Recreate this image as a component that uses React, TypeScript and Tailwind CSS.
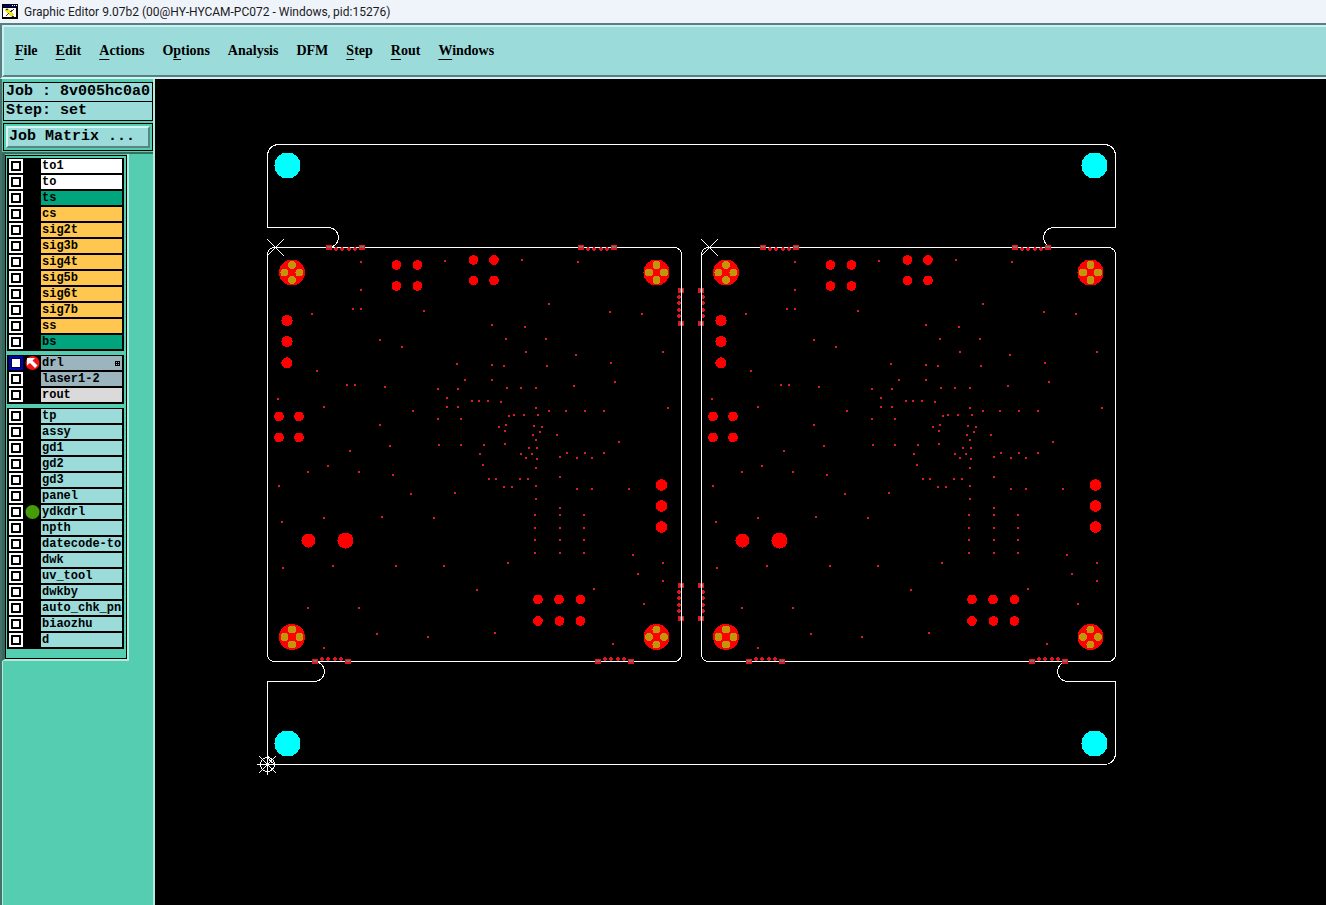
import { useState } from 'react'

type Layer = {
  name: string
  color: string
  mark?: 'arrow' | 'dot'
  grid?: boolean
}

type Point = [number, number]
type Pad = [number, number, number]

const MENUS = [
  { label: 'File', key: 0 },
  { label: 'Edit', key: 0 },
  { label: 'Actions', key: 0 },
  { label: 'Options', key: 1 },
  { label: 'Analysis', key: -1 },
  { label: 'DFM', key: -1 },
  { label: 'Step', key: 0 },
  { label: 'Rout', key: 0 },
  { label: 'Windows', key: 0 },
]

const WHITE = 'bg-white'
const MASK = 'bg-[#00a57d]'
const SIGNAL = 'bg-[#ffc74f]'
const DRILL = 'bg-[#9bb4be]'
const ROUT = 'bg-[#dadada]'
const DOC = 'bg-[#9bdbda]'

const LAYER_GROUPS: Layer[][] = [
  [
    { name: 'to1', color: WHITE },
    { name: 'to', color: WHITE },
    { name: 'ts', color: MASK },
    { name: 'cs', color: SIGNAL },
    { name: 'sig2t', color: SIGNAL },
    { name: 'sig3b', color: SIGNAL },
    { name: 'sig4t', color: SIGNAL },
    { name: 'sig5b', color: SIGNAL },
    { name: 'sig6t', color: SIGNAL },
    { name: 'sig7b', color: SIGNAL },
    { name: 'ss', color: SIGNAL },
    { name: 'bs', color: MASK },
  ],
  [
    { name: 'drl', color: DRILL, mark: 'arrow', grid: true },
    { name: 'laser1-2', color: DRILL },
    { name: 'rout', color: ROUT },
  ],
  [
    { name: 'tp', color: DOC },
    { name: 'assy', color: DOC },
    { name: 'gd1', color: DOC },
    { name: 'gd2', color: DOC },
    { name: 'gd3', color: DOC },
    { name: 'panel', color: DOC },
    { name: 'ydkdrl', color: DOC, mark: 'dot' },
    { name: 'npth', color: DOC },
    { name: 'datecode-to', color: DOC },
    { name: 'dwk', color: DOC },
    { name: 'uv_tool', color: DOC },
    { name: 'dwkby', color: DOC },
    { name: 'auto_chk_pnl', color: DOC },
    { name: 'biaozhu', color: DOC },
    { name: 'd', color: DOC },
  ],
]

// Via holes of one board
const VIAS: Point[] = [
  [361, 262], [361, 290], [353, 309], [361, 309], [312, 314], [445, 261], [424, 311], [380, 340],
  [402, 347], [457, 364], [317, 371], [465, 380], [347, 385], [355, 385], [385, 387], [438, 389],
  [458, 389], [278, 399], [324, 407], [413, 411], [447, 398], [447, 407], [458, 407], [472, 401],
  [479, 401], [438, 419], [461, 419], [380, 425], [390, 446], [439, 445], [461, 445], [484, 445],
  [350, 451], [480, 454], [328, 466], [308, 472], [359, 472], [393, 475], [483, 465], [279, 486],
  [411, 494], [455, 493], [382, 517], [324, 518], [434, 518], [282, 522], [283, 568], [333, 566],
  [396, 566], [444, 566], [477, 590], [308, 608], [359, 608], [377, 634], [428, 637], [324, 648],
  [495, 633], [522, 260], [578, 262], [549, 304], [610, 312], [642, 314], [492, 325], [525, 327],
  [506, 339], [546, 339], [526, 352], [576, 355], [663, 352], [492, 365], [504, 366], [547, 366],
  [611, 363], [492, 380], [507, 388], [521, 388], [536, 388], [574, 386], [615, 382], [488, 401],
  [501, 402], [536, 408], [549, 411], [566, 411], [585, 411], [604, 411], [668, 408], [509, 416],
  [514, 415], [524, 415], [538, 415], [499, 427], [506, 425], [505, 431], [534, 426], [542, 427],
  [540, 432], [533, 435], [557, 435], [536, 440], [505, 444], [619, 442], [529, 448], [537, 448],
  [521, 454], [532, 454], [526, 458], [537, 459], [560, 457], [567, 453], [577, 458], [585, 453],
  [592, 458], [604, 453], [536, 468], [489, 479], [496, 479], [520, 479], [528, 479], [504, 487],
  [512, 487], [536, 486], [536, 499], [560, 477], [577, 489], [592, 489], [629, 489], [560, 508],
  [535, 515], [535, 528], [535, 540], [535, 553], [560, 515], [560, 528], [560, 540], [560, 553],
  [584, 515], [584, 528], [584, 540], [584, 553], [508, 563], [633, 555], [638, 574], [663, 563],
  [663, 581], [594, 589], [644, 604], [613, 644],
]

const PADS: Pad[] = [
  [396.5, 265, 4.8], [417.5, 265, 4.8], [396.5, 286, 4.8], [417.5, 286, 4.8],
  [473.5, 260, 4.8], [494, 260, 4.8], [473.5, 280.5, 4.8], [494, 280.5, 4.8],
  [287, 320.5, 5.6], [287, 341.5, 5.6], [287, 363, 5.6],
  [279, 416.5, 4.8], [299, 416.5, 4.8], [279, 437.5, 4.8], [299, 437.5, 4.8],
  [308.5, 540.5, 7], [345.5, 540.5, 8],
  [661.5, 485, 5.8], [661.5, 506, 5.8], [661.5, 527, 5.8],
  [538, 599.5, 4.8], [559, 599.5, 4.8], [580.5, 599.5, 4.8],
  [538, 621, 4.8], [559.5, 621, 4.8], [580.5, 621, 4.8],
]

const FIDUCIALS: Point[] = [[292, 272.5], [656.5, 272.5], [292, 637], [656.5, 637]]

const TOOLING: Point[] = [[287.5, 165.5], [1094.5, 165.5], [287.5, 743.5], [1094.5, 743.5]]

const BOARD_OFFSETS = [0, 434]

const TAB_STEPS = [7, 13, 20, 26]

// Breakaway holes along a horizontal edge, starting at x
function TabRow({ x, y, side }: { x: number; y: number; side: 1 | -1 }) {
  return (
    <g fill="#e0161e">
      {[x, x + 33].map((cx) => (
        <g key={cx}>
          <rect x={cx - 3} y={y - 2} width="6" height="5" />
          <rect x={cx - 2} y={y - 1} width="4" height="2" fill="#8d6a6a" />
        </g>
      ))}
      {TAB_STEPS.map((s) => (
        <path key={s} d={`M${x + s - 2} ${y + side * 2}h4M${x + s} ${y + side * 2 - 2}v4`} stroke="#e0161e" strokeWidth="2" />
      ))}
    </g>
  )
}

// The same along a vertical edge
function TabColumn({ x, y, side }: { x: number; y: number; side: 1 | -1 }) {
  return (
    <g fill="#e0161e">
      {[y, y + 33].map((cy) => (
        <g key={cy}>
          <rect x={x - 3} y={cy - 2} width="6" height="5" />
          <rect x={x - 1} y={cy - 1} width="3" height="3" fill="#8d6a6a" />
        </g>
      ))}
      {TAB_STEPS.map((s) => (
        <path key={s} d={`M${x + side * 2 - 2} ${y + s}h4M${x + side * 2} ${y + s - 2}v4`} stroke="#e0161e" strokeWidth="2" />
      ))}
    </g>
  )
}

function Board({ offset }: { offset: number }) {
  return (
    <g transform={`translate(${offset} 0)`}>
      <rect x="267.5" y="247.5" width="414" height="414" rx="7" fill="none" stroke="#fff" />
      <path d="M267 239l17 17M284 239l-17 17" stroke="#fff" />
      {VIAS.map(([x, y]) => (
        <rect key={`${x}-${y}`} x={x - 1} y={y - 1} width="2" height="2" fill="#dc1c26" />
      ))}
      {PADS.map(([x, y, r]) => (
        <circle key={`${x}-${y}`} cx={x} cy={y} r={r} fill="#f00" />
      ))}
      {FIDUCIALS.map(([x, y]) => (
        <g key={`${x}-${y}`}>
          <circle cx={x} cy={y} r="13" fill="#f00" />
          <g fill="#c1960c">
            <circle cx={x} cy={y - 7.5} r="4" />
            <circle cx={x} cy={y + 7.5} r="4" />
            <circle cx={x - 7.5} cy={y} r="4" />
            <circle cx={x + 7.5} cy={y} r="4" />
          </g>
        </g>
      ))}
      <TabRow x={329} y={247} side={1} />
      <TabRow x={581} y={247} side={1} />
      <TabRow x={315} y={661} side={-1} />
      <TabRow x={598} y={661} side={-1} />
    </g>
  )
}

function PanelView() {
  return (
    <svg
      viewBox="155 79 1171 826"
      preserveAspectRatio="xMinYMin meet"
      shapeRendering="crispEdges"
      className="block w-full"
      role="img"
      aria-label="Panel layout"
    >
      <g fill="none" stroke="#fff">
        <path d="M328.5 247.5a10 10 0 0 0 0 -20H267.5V155.5a11 11 0 0 1 11 -11H1104.5a11 11 0 0 1 11 11V227.5H1053.5a10 10 0 0 0 0 20" />
        <path d="M314.5 661.5a10 10 0 0 1 0 20H267.5V753.5a11 11 0 0 0 11 11H1104.5a11 11 0 0 0 11 -11V681.5H1067.5a10 10 0 0 1 0 -20" />
      </g>
      {TOOLING.map(([x, y]) => (
        <circle key={`${x}-${y}`} cx={x} cy={y} r="13" fill="#0ff" />
      ))}
      {BOARD_OFFSETS.map((offset) => (
        <Board key={offset} offset={offset} />
      ))}
      <TabColumn x={681} y={290} side={-1} />
      <TabColumn x={681} y={585} side={-1} />
      <TabColumn x={701} y={290} side={1} />
      <TabColumn x={701} y={585} side={1} />
      <path d="M681.5 255v400M701.5 255v400" stroke="#fff" />
      {/* datum */}
      <g fill="none" stroke="#fff">
        <circle cx="267.5" cy="764.5" r="7" />
        <path d="M257 764.5h21M267.5 754v21M259 756l17 17M276 756l-17 17" />
      </g>
    </svg>
  )
}

function LayerMark({ mark }: { mark?: Layer['mark'] }) {
  return (
    <svg viewBox="0 0 18 14" className="h-3.5 w-[18px] shrink-0" aria-hidden="true">
      {mark === 'dot' && <circle cx="9.5" cy="7" r="7" fill="#469c08" />}
      {mark === 'arrow' && (
        <>
          <circle cx="9.5" cy="7" r="7" fill="#f01414" />
          <path d="M4 2h8l-2.500 2.500 5 5-2.500 2.500-5-5L4 9.500z" fill="#fff" />
        </>
      )}
    </svg>
  )
}

function LayerRow({ layer, active, onSelect }: { layer: Layer; active: boolean; onSelect: () => void }) {
  return (
    <label className="flex h-3.5 items-center">
      <input
        type="checkbox"
        checked={active}
        onChange={onSelect}
        className={`size-3.5 shrink-0 appearance-none border-2 bg-white ${
          active ? 'border-[#0000b4] shadow-[inset_0_0_0_1px_#000050]' : 'border-white shadow-[inset_0_0_0_2px_#000]'
        }`}
      />
      <LayerMark mark={layer.mark} />
      <span className={`flex h-3.5 min-w-0 flex-1 items-center overflow-hidden pl-px text-[12px] leading-[14px] font-bold whitespace-nowrap ${layer.color}`}>
        {layer.name}
        {layer.grid && (
          <svg viewBox="0 0 5 5" className="mr-0.5 ml-auto size-[5px]" shapeRendering="crispEdges" aria-hidden="true">
            <path d="M0 0h5v5h-5zM1 1v1h1v-1zM3 1v1h1v-1zM1 3v1h1v-1zM3 3v1h1v-1z" fill="#000" fillRule="evenodd" />
          </svg>
        )}
      </span>
    </label>
  )
}

function Sidebar() {
  const [activeLayer, setActiveLayer] = useState('drl')

  return (
    <aside className="flex w-[155px] shrink-0 flex-col border-r-2 border-l-2 border-r-[#b2ecdc] border-l-[#48706a] bg-[#55cdb0] font-['Liberation_Mono',monospace] text-black">
      <div className="flex flex-col gap-0.5 border-b-2 border-[#35705f] pt-[3px] pb-px pl-px">
        <div className="flex flex-col gap-px border border-black bg-black text-[15px] leading-[18px] font-bold">
          <div className="h-[18px] bg-[#9bdbda] pl-0.5 whitespace-pre">Job : 8v005hc0a0</div>
          <div className="h-[18px] bg-[#9bdbda] pl-0.5 whitespace-pre">Step: set</div>
        </div>
        <div className="border border-black p-0.5">
          <button
            type="button"
            className="block w-full border-2 border-t-[#d5f5f3] border-r-[#5a8585] border-b-[#5a8585] border-l-[#d5f5f3] bg-[#9bdbda] pl-px text-left text-[15px] leading-[18px] font-bold"
          >
            Job Matrix ...
          </button>
        </div>
      </div>
      <div className="w-[127px] border-r-2 border-b-2 border-l-[3px] border-r-[#b2ecdc] border-b-[#b2ecdc] border-l-[#35695c] pt-px">
        <div className="flex flex-col gap-1 border border-black pt-0.5 pr-0.5 pb-[9px] pl-px">
          {LAYER_GROUPS.map((group) => (
            <div key={group[0].name} className="flex flex-col gap-0.5 bg-black pt-px pr-0.5 pb-0.5 pl-0.5">
              {group.map((layer) => (
                <LayerRow
                  key={layer.name}
                  layer={layer}
                  active={layer.name === activeLayer}
                  onSelect={() => setActiveLayer(layer.name)}
                />
              ))}
            </div>
          ))}
        </div>
      </div>
      <div className="flex-1 border-l border-[#b2ecdc]" />
    </aside>
  )
}

function MenuLabel({ label, index }: { label: string; index: number }) {
  if (index < 0) return <>{label}</>
  return (
    <>
      {label.slice(0, index)}
      <span className="underline decoration-1 underline-offset-4">{label[index]}</span>
      {label.slice(index + 1)}
    </>
  )
}

export default function App() {
  return (
    <div className="flex min-h-screen flex-col bg-black">
      <header className="flex h-[23px] items-center gap-1.5 bg-[#eff4fb] pl-0.5">
        <svg viewBox="0 0 16 15" className="h-[15px] w-4" shapeRendering="crispEdges" aria-hidden="true">
          <path d="M0 0h16v15H0z" fill="#000" />
          <path d="M1 1h14v2H1z" fill="#000080" />
          <path d="M10 1h1v1h-1zM12 1h1v1h-1zM14 1h1v1h-1z" fill="#fff" />
          <path d="M1 4h13v9H1z" fill="#fff" />
          <path d="M4 5l7 7" stroke="#e8dc00" strokeWidth="3" />
          <path d="M12 5l-8 7M4 5h2M10 12h2" stroke="#333" />
          <path d="M6 7l4 4" stroke="#f5ea20" strokeWidth="2" />
        </svg>
        <h1 className="font-[Roboto,sans-serif] text-[12px] leading-4 text-[#1b1b1b]">
          Graphic Editor 9.07b2 (00@HY-HYCAM-PC072 - Windows, pid:15276)
        </h1>
      </header>
      <div className="border-t-2 border-b-2 border-l-2 border-t-[#587f84] border-b-[#d8f3f3] border-l-[#587f84]">
        <nav className="flex h-[52px] items-center gap-[18px] border-t-2 border-b-2 border-l-2 border-t-[#cdf1f1] border-b-[#587f84] border-l-[#cdf1f1] bg-[#9bdbda] pl-[11px] font-['Liberation_Serif',serif] text-[14px] leading-5 font-bold text-black">
          {MENUS.map((menu) => (
            <button key={menu.label} type="button">
              <MenuLabel label={menu.label} index={menu.key} />
            </button>
          ))}
        </nav>
      </div>
      <div className="flex flex-1">
        <Sidebar />
        <main className="min-w-0 flex-1 bg-black">
          <PanelView />
        </main>
      </div>
    </div>
  )
}
